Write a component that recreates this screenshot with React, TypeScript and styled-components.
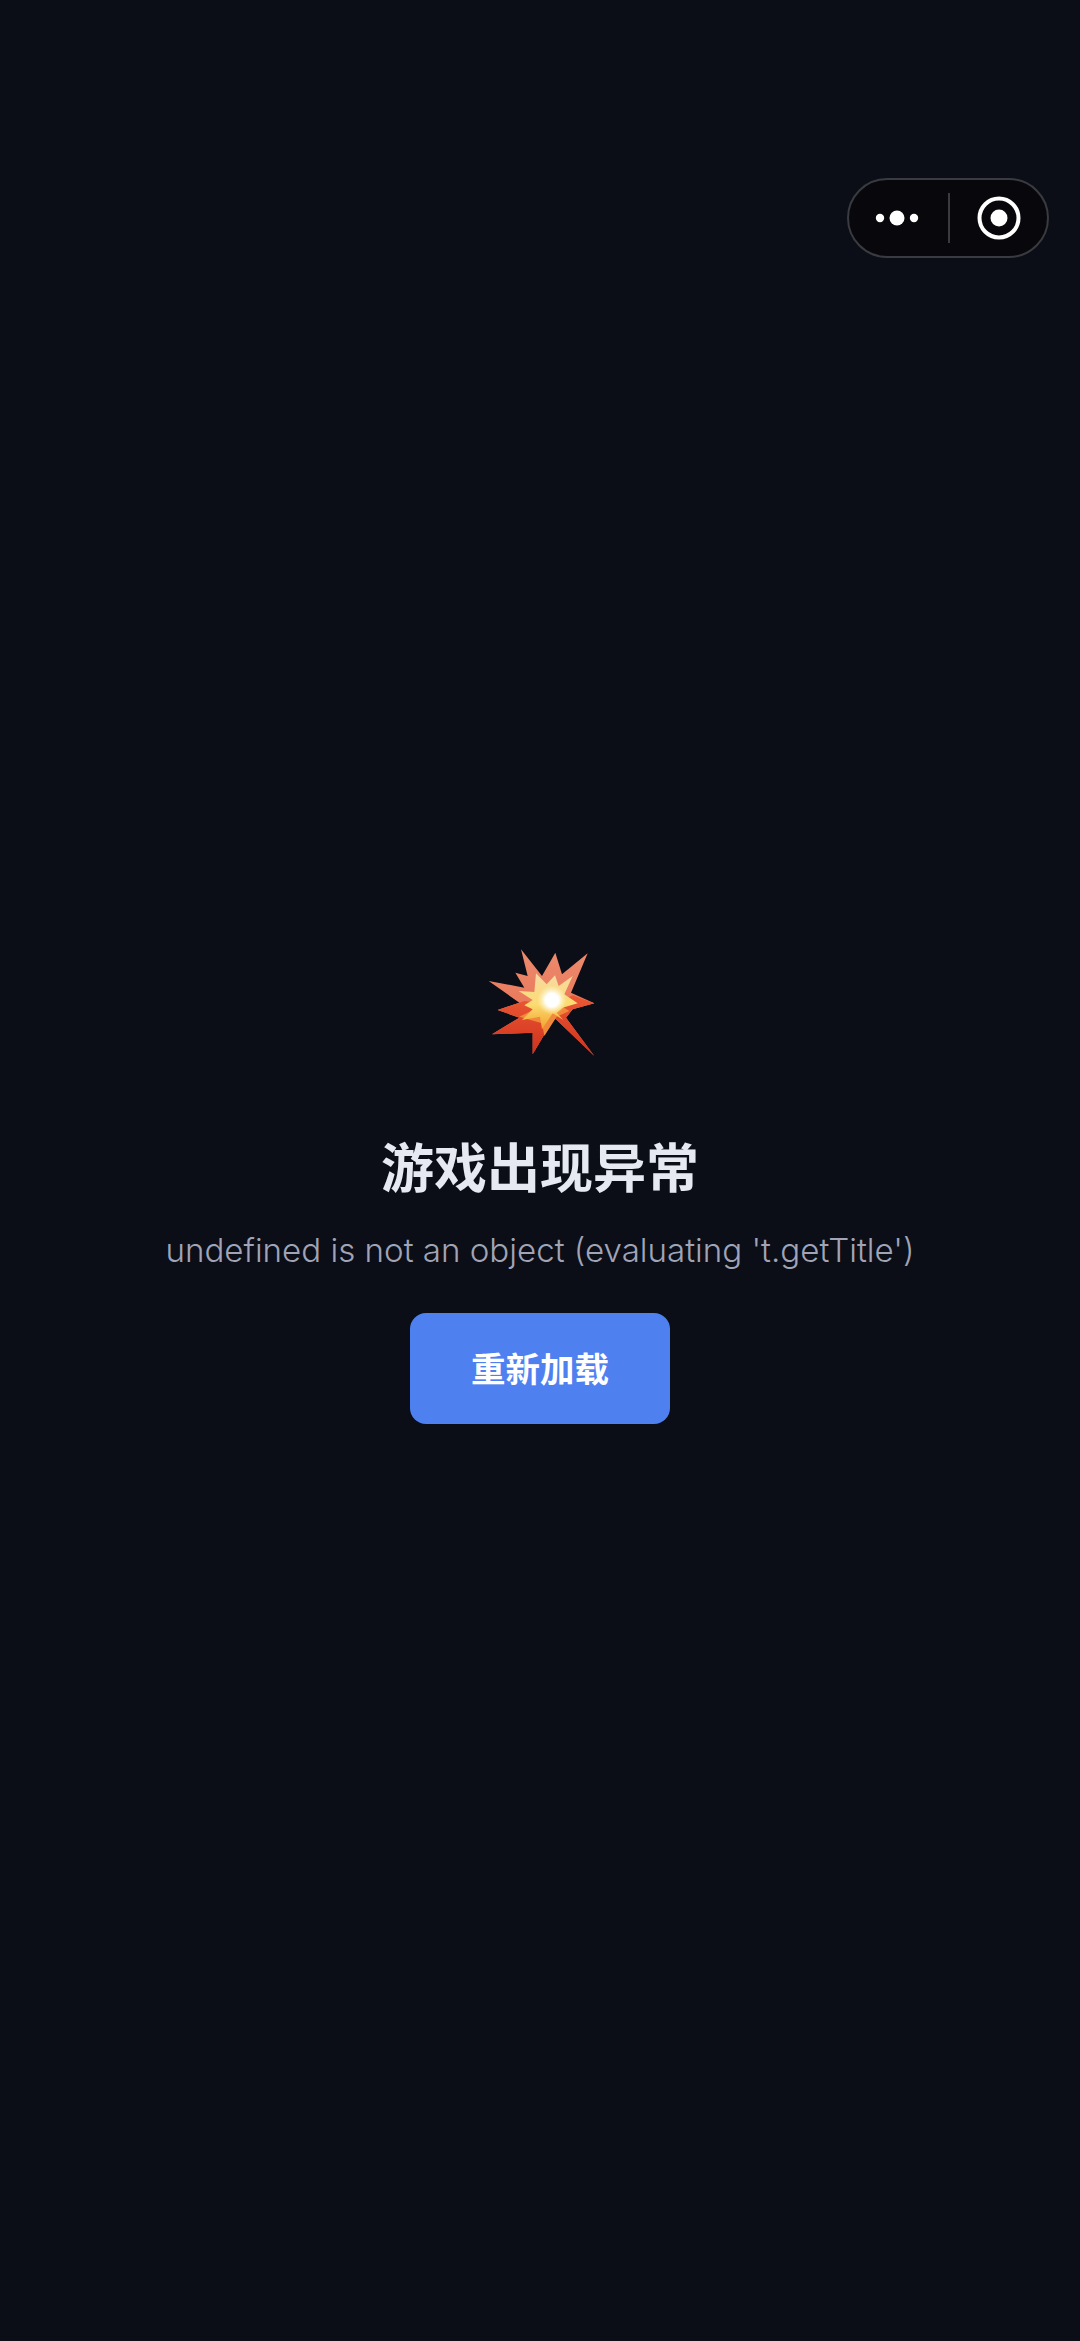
import React from "react";
import styled, { createGlobalStyle } from "styled-components";

const GlobalStyle = createGlobalStyle`
  html, body {
    margin: 0;
    padding: 0;
    background: #0b0e16;
  }
`;

const Page = styled.div`
  position: relative;
  width: 1080px;
  height: 2341px;
  overflow: hidden;
  background: #0b0e16;
  display: flex;
  flex-direction: column;
  align-items: center;
  padding-top: 946px;
  box-sizing: border-box;
  font-family: Inter, "Noto Sans CJK SC", sans-serif;
`;

const Capsule = styled.div`
  position: absolute;
  top: 178px;
  left: 847px;
  width: 202px;
  height: 80px;
  box-sizing: border-box;
  border: 2px solid #3a3b41;
  border-radius: 40px;
  background: #08080c;
  display: flex;
  align-items: center;
`;

const CapsuleSide = styled.div<{ $grow: number; $nudge: number }>`
  flex: ${(p) => p.$grow};
  display: flex;
  align-items: center;
  justify-content: center;
  padding-left: ${(p) => Math.max(p.$nudge, 0)}px;
  padding-right: ${(p) => Math.max(-p.$nudge, 0)}px;
`;

const CapsuleDivider = styled.div`
  width: 2px;
  height: 50px;
  background: #3a3b41;
`;

const Burst = styled.svg`
  display: block;
  width: 112px;
  height: 112px;
  margin-left: 4px;
`;

const Title = styled.h1`
  margin: 71px 0 0;
  font-family: "Noto Sans CJK SC", sans-serif;
  font-size: 53px;
  line-height: 72px;
  font-weight: 700;
  color: #e6e9f2;
`;

const Message = styled.p`
  margin: 26px 0 0;
  font-size: 33.1px;
  line-height: 46px;
  font-weight: 300;
  color: #a0a4b6;
  white-space: nowrap;
`;

const ReloadButton = styled.button`
  margin-top: 40px;
  width: 260px;
  height: 111px;
  border: 0;
  border-radius: 16px;
  background: #4f80f0;
  color: #ffffff;
  font-family: "Noto Sans CJK SC", sans-serif;
  font-size: 34.5px;
  font-weight: 600;
  padding: 0 0 4px;
`;

export default function App() {
  return (
    <Page>
      <GlobalStyle />
      <Capsule>
        <CapsuleSide $grow={100} $nudge={-2}>
          <svg width="50" height="20" viewBox="0 0 50 20">
            <circle cx="8" cy="10" r="4.2" fill="#fff" />
            <circle cx="25" cy="10" r="7.5" fill="#fff" />
            <circle cx="42" cy="10" r="4.2" fill="#fff" />
          </svg>
        </CapsuleSide>
        <CapsuleDivider />
        <CapsuleSide $grow={98} $nudge={2}>
          <svg width="44" height="44" viewBox="0 0 44 44">
            <circle cx="22" cy="22" r="19.5" fill="none" stroke="#fff" strokeWidth="4" />
            <circle cx="22" cy="22" r="8.5" fill="#fff" />
          </svg>
        </CapsuleSide>
      </Capsule>
      <Burst viewBox="50 50 336 336">
        <defs>
          <linearGradient id="outer" x1="0" y1="0" x2="0" y2="1">
            <stop offset="0" stopColor="#ec8b6e" />
            <stop offset="1" stopColor="#e8694a" />
          </linearGradient>
          <linearGradient id="lower" x1="0" y1="0" x2="0" y2="1">
            <stop offset="0" stopColor="#ea5a34" />
            <stop offset="1" stopColor="#cf2f1c" />
          </linearGradient>
          <linearGradient id="middle" x1="0" y1="0" x2="0" y2="1">
            <stop offset="0" stopColor="#f7d9a6" />
            <stop offset="0.55" stopColor="#fbdc72" />
            <stop offset="1" stopColor="#f3a12a" />
          </linearGradient>
          <radialGradient id="core">
            <stop offset="0" stopColor="#ffffff" />
            <stop offset="0.45" stopColor="#ffffff" />
            <stop offset="1" stopColor="#fff6c4" stopOpacity="0" />
          </radialGradient>
        </defs>
        <polygon
          fill="url(#outer)"
          points="155,60 218,140 258,70 278,135 355,72 305,190 375,222 310,240 290,265 375,380 255,265 190,375 190,310 68,315 150,265 85,242 150,220 58,155 165,175 138,130 175,140"
        />
        <polygon
          fill="url(#lower)"
          points="85,242 165,215 250,225 310,198 375,222 310,240 290,265 375,380 255,265 190,375 190,310 68,315 150,265"
        />
        <polygon
          fill="#f08a3a"
          points="150,262 205,235 280,232 300,245 262,262 225,320 218,282"
        />
        <polygon
          fill="url(#middle)"
          points="200,132 232,165 257,138 268,170 310,140 285,195 325,222 280,235 262,250 282,272 250,252 218,300 212,262 158,272 190,240 165,228 190,212 148,185 195,188"
        />
        <circle cx="248" cy="212" r="44" fill="url(#core)" />
      </Burst>
      <Title>游戏出现异常</Title>
      <Message>undefined is not an object (evaluating 't.getTitle')</Message>
      <ReloadButton>重新加载</ReloadButton>
    </Page>
  );
}
